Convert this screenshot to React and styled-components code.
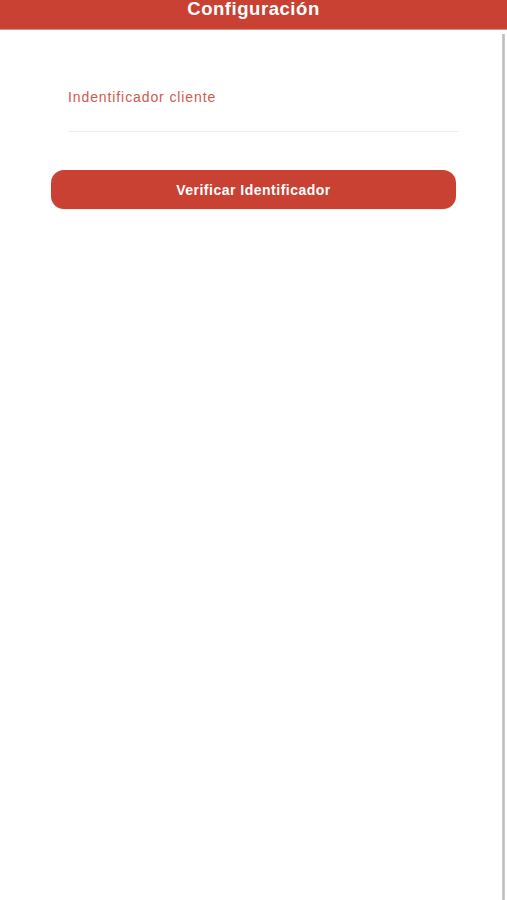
import React from "react";
import styled, { createGlobalStyle } from "styled-components";

const Global = createGlobalStyle`
  html, body { margin: 0; padding: 0; background: #ffffff; }
  body { font-family: "Liberation Sans", Arial, Helvetica, sans-serif; overflow: hidden; }
`;

const Screen = styled.div`
  position: relative;
  width: 507px;
  height: 900px;
  background: #ffffff;
  display: flex;
  flex-direction: column;
`;

const NavBar = styled.header`
  height: 29px;
  background: #c94133;
  display: flex;
  justify-content: center;
  align-items: flex-start;
  border-bottom: 1px solid #e08a80;
`;

const Title = styled.h1`
  margin: 0;
  color: #ffffff;
  font-size: 18.5px;
  font-weight: 700;
  line-height: 17px;
  letter-spacing: 0.55px;
`;

const Content = styled.main`
  display: flex;
  flex-direction: column;
  padding: 59px 51px 0 51px;
`;

const Field = styled.div`
  display: flex;
  flex-direction: column;
  padding-left: 17px;
  margin-right: -2px;
`;

const Label = styled.label`
  color: #d2584d;
  font-size: 14px;
  line-height: 16px;
  letter-spacing: 0.9px;
`;

const Underline = styled.div`
  height: 1px;
  margin-top: 26px;
  background: #ececec;
`;

const PrimaryButton = styled.button`
  margin-top: 38px;
  height: 39px;
  border: none;
  border-radius: 13px;
  background: #c94133;
  color: #ffffff;
  font-family: "Liberation Sans", Arial, sans-serif;
  font-size: 14px;
  font-weight: 700;
  letter-spacing: 0.5px;
  cursor: pointer;
  box-shadow: 0 1px 1px rgba(0, 0, 0, 0.08);
`;

const ScrollIndicator = styled.div`
  position: absolute;
  top: 34px;
  bottom: 0;
  right: 2px;
  width: 3px;
  background: linear-gradient(to right, #d4d4d4, #bdbdbd, #d0d0d0);
`;

export default function App() {
  return (
    <>
      <Global />
      <Screen>
        <NavBar>
          <Title>Configuración</Title>
        </NavBar>
        <Content>
          <Field>
            <Label>Indentificador cliente</Label>
            <Underline />
          </Field>
          <PrimaryButton>Verificar Identificador</PrimaryButton>
        </Content>
        <ScrollIndicator />
      </Screen>
    </>
  );
}
